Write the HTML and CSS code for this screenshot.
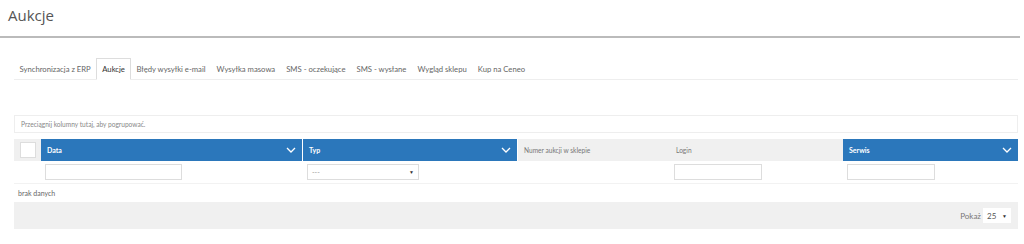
FILE: index.html
```html
<!DOCTYPE html>
<html lang="pl">
<head>
    <meta charset="UTF-8">
    <meta name="viewport" content="width=device-width, initial-scale=1.0">
    <title>Aukcje</title>
    <link rel="stylesheet" href="styles.css">
</head>
<body>

    <h1 class="page-title">Aukcje</h1>

    <div class="content">
        <ul class="tabs">
            <li>Synchronizacja z ERP</li>
            <li class="active">Aukcje</li>
            <li>Błędy wysyłki e-mail</li>
            <li>Wysyłka masowa</li>
            <li>SMS - oczekujące</li>
            <li>SMS - wysłane</li>
            <li>Wygląd sklepu</li>
            <li>Kup na Ceneo</li>
        </ul>

        <div class="grid">
            <div class="group-panel">Przeciągnij kolumny tutaj, aby pogrupować.</div>

            <div class="grid-row head">
                <div class="cell check"><span class="box"></span></div>
                <div class="cell blue">Data
                    <svg class="chev" viewBox="0 0 10 6"><polyline points="1,1 5,5 9,1"/></svg>
                </div>
                <div class="cell blue">Typ
                    <svg class="chev" viewBox="0 0 10 6"><polyline points="1,1 5,5 9,1"/></svg>
                </div>
                <div class="cell plain">Numer aukcji w sklepie</div>
                <div class="cell plain">Login</div>
                <div class="cell blue">Serwis
                    <svg class="chev" viewBox="0 0 10 6"><polyline points="1,1 5,5 9,1"/></svg>
                </div>
            </div>

            <div class="grid-row filters">
                <div class="cell"></div>
                <div class="cell"><input type="text" class="f-data"></div>
                <div class="cell"><div class="select f-typ"><span>---</span><span class="arrow">▼</span></div></div>
                <div class="cell"></div>
                <div class="cell"><input type="text" class="f-login"></div>
                <div class="cell"><input type="text" class="f-serwis"></div>
            </div>

            <div class="empty">brak danych</div>

            <div class="pager">
                <span>Pokaż</span>
                <div class="select page-size"><span>25</span><span class="arrow">▼</span></div>
            </div>
        </div>
    </div>

</body>
</html>
```

FILE: styles.css
```css
body {
    margin: 0;
    font-family: Lato, "Open Sans", sans-serif;
    color: #555;
    background: #fff;
}

.page-title {
    margin: 0 4px 0 0;
    height: 38px;
    padding: 5px 0 0 8px;
    box-sizing: border-box;
    font-family: "Open Sans", sans-serif;
    font-size: 15px;
    font-weight: normal;
    color: #555;
    border-bottom: 2px solid #bbb;
}

.content {
    padding: 20px 6px 0 14px;
}

.tabs {
    list-style: none;
    margin: 0;
    padding: 0;
    display: flex;
    border-bottom: 1px solid #eee;
    font-size: 7.7px;
}

.tabs li {
    height: 20px;
    line-height: 21px;
    padding: 0 4.5px;
    color: #666;
    border: 1px solid transparent;
    border-bottom: none;
    margin-bottom: -1px;
}

.tabs li.active {
    color: #333;
    padding: 0 5px;
    background: #fff;
    border-color: #ddd;
    border-bottom: 1px solid #fff;
}

.grid {
    margin-top: 35px;
    font-size: 7px;
}

.group-panel {
    height: 16px;
    line-height: 16px;
    padding-left: 6px;
    border: 1px solid #eee;
    color: #888;
    font-size: 6.6px;
    margin-bottom: 6px;
}

.grid-row {
    display: grid;
    grid-template-columns: 27px 262px 215px 152px 173px 175px;
}

.grid-row.head {
    height: 22px;
}

.head .cell {
    display: flex;
    align-items: center;
    padding: 0 6px;
}

.head .check {
    background: #f0f0f0;
    padding: 0;
    justify-content: center;
}

.box {
    width: 14px;
    height: 14px;
    background: #fff;
    border: 1px solid #ddd;
}

.head .blue {
    background: #2b77bb;
    color: #fff;
    font-weight: bold;
    justify-content: space-between;
    border-right: 1px solid #fff;
}

.head .cell:last-child {
    border-right: none;
}

.head .plain {
    background: #f0f0f0;
    color: #777;
    font-size: 6.6px;
}

.chev {
    width: 10px;
    height: 6px;
    fill: none;
    stroke: #fff;
    stroke-width: 1.3;
}

.grid-row.filters {
    height: 22px;
    border-bottom: 1px solid #f2f2f2;
}

.filters .cell {
    display: flex;
    align-items: center;
    padding-left: 4px;
}

.filters input,
.select {
    height: 16px;
    box-sizing: border-box;
    border: 1px solid #ddd;
    background: #fff;
    margin: 0;
    padding: 0 4px;
}

.f-data { width: 137px; }
.f-login { width: 88px; }
.f-serwis { width: 88px; }

.select {
    display: flex;
    align-items: center;
    justify-content: space-between;
    color: #999;
}

.f-typ { width: 112px; }

.arrow {
    font-size: 5px;
    color: #333;
}

.empty {
    height: 18px;
    line-height: 18px;
    padding: 0 4px;
    color: #666;
}

.pager {
    height: 27px;
    background: #f0f0f0;
    display: flex;
    align-items: center;
    justify-content: flex-end;
    padding-right: 6px;
    font-size: 8px;
    color: #777;
}

.page-size {
    width: 30px;
    height: 17px;
    margin-left: 1px;
    color: #555;
    font-size: 8px;
    border-color: #f0f0f0;
}
```
